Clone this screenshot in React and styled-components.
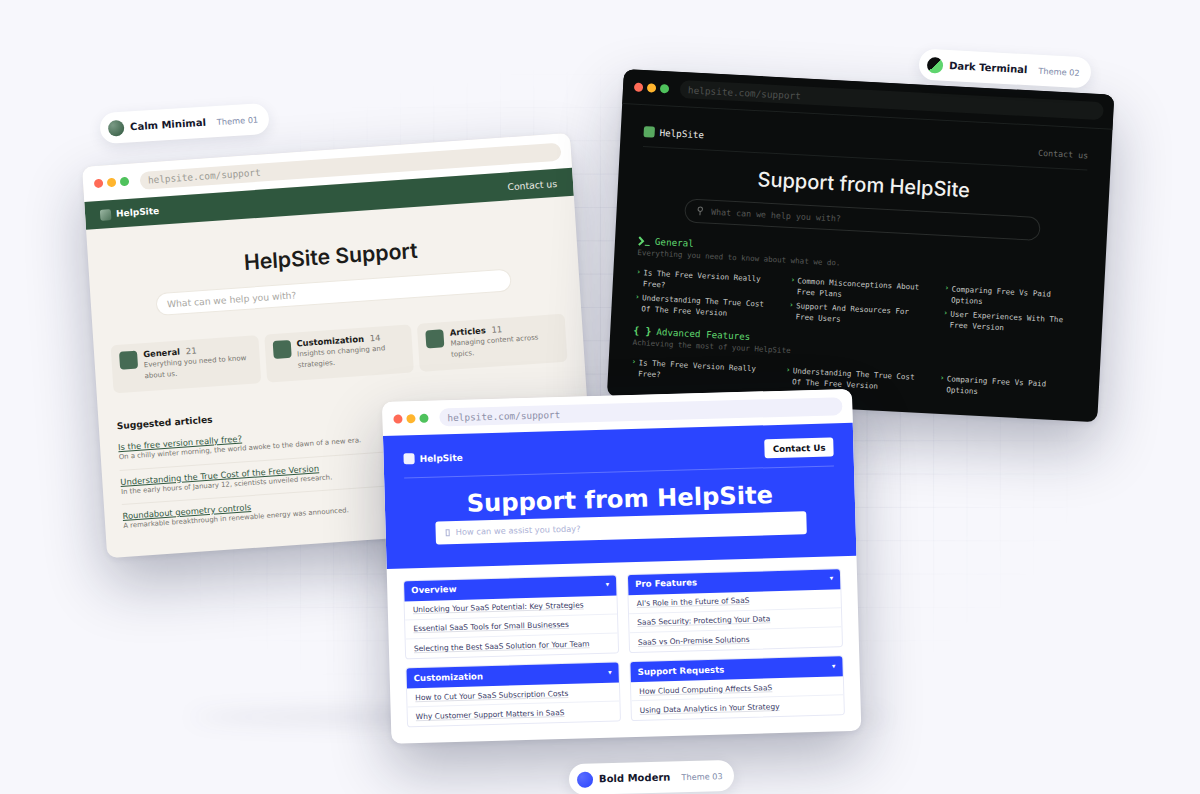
import React from "react";
import styled, { createGlobalStyle } from "styled-components";

const sans = `"DejaVu Sans", sans-serif`;
const inter = `Inter, "DejaVu Sans", sans-serif`;
const mono = `"DejaVu Sans Mono", monospace`;

const GlobalStyle = createGlobalStyle`
  html, body {
    margin: 0;
    padding: 0;
    background: #f7f7fc;
  }
  * {
    box-sizing: border-box;
  }
`;

const Stage = styled.div`
  position: relative;
  width: 1200px;
  height: 794px;
  overflow: hidden;
  background: #f7f7fc;
  font-family: ${sans};
`;

const Grid = styled.div`
  position: absolute;
  inset: 0;
  background-image: linear-gradient(rgba(60, 70, 120, 0.05) 1px, transparent 1px),
    linear-gradient(90deg, rgba(60, 70, 120, 0.05) 1px, transparent 1px);
  background-size: 33.33px 33.33px;
  background-position: 0 7px;
  mask-image: radial-gradient(ellipse 520px 340px at 600px 400px, #000 55%, transparent 100%);
`;

const FloorShadow = styled.div`
  position: absolute;
  left: 190px;
  top: 708px;
  width: 700px;
  height: 18px;
  border-radius: 50%;
  background: rgba(40, 45, 80, 0.09);
  filter: blur(10px);
`;

const Win = styled.div`
  position: absolute;
  left: ${(p) => p.$x}px;
  top: ${(p) => p.$y}px;
  width: ${(p) => p.$w}px;
  height: ${(p) => p.$h}px;
  transform: rotate(${(p) => p.$r}deg) skewY(${(p) => p.$skew || 0}deg);
  transform-origin: 0 0;
  border-radius: 10px;
  overflow: hidden;
  display: flex;
  flex-direction: column;
  background: ${(p) => p.$bg};
  box-shadow: 0 26px 60px rgba(20, 25, 55, 0.3), 0 2px 6px rgba(20, 25, 55, 0.08);
`;

const Chrome = styled.div`
  flex: none;
  height: ${(p) => p.$h}px;
  display: flex;
  align-items: center;
  gap: 4px;
  padding: 0 10px 0 11px;
  background: ${(p) => p.$bg};
  border-bottom: ${(p) => (p.$line ? `1px solid ${p.$line}` : "none")};
`;

const Dot = styled.span`
  width: 9px;
  height: 9px;
  border-radius: 50%;
  background: ${(p) => p.$c};
`;

const Url = styled.div`
  flex: 1;
  height: 18px;
  margin-left: 7px;
  padding-left: 8px;
  display: flex;
  align-items: center;
  border-radius: 9px;
  background: ${(p) => p.$bg};
  color: ${(p) => p.$c};
  font-family: ${mono};
  font-size: 9.4px;
`;

const BrowserBar = ({ bg, url, urlColor, line, h = 35 }) => (
  <Chrome $bg={bg} $line={line} $h={h}>
    <Dot $c="#ff6b57" />
    <Dot $c="#ffb52e" />
    <Dot $c="#4fc25c" />
    <Url $bg={url} $c={urlColor}>helpsite.com/support</Url>
  </Chrome>
);

/* Calm minimal */
const CalmNav = styled.div`
  flex: none;
  height: 28px;
  padding: 0 16px 0 15px;
  display: flex;
  align-items: center;
  justify-content: space-between;
  background: #2f573e;
  color: #f5f2ed;
`;

const Brand = styled.div`
  display: flex;
  align-items: center;
  gap: ${(p) => p.$gap || 5}px;
  font-family: ${(p) => p.$font || sans};
  font-weight: ${(p) => p.$weight || 700};
  font-size: ${(p) => p.$size || 9}px;
  color: ${(p) => p.$c || "#fff"};
`;

const BrandMark = styled.span`
  width: ${(p) => p.$s || 11}px;
  height: ${(p) => p.$s || 11}px;
  border-radius: 2.5px;
  background: ${(p) => p.$bg};
`;

const CalmLink = styled.span`
  font-size: 9.25px;
  color: #f0eee8;
`;

const CalmBody = styled.div`
  flex: 1;
  padding: 28px 17px 0;
  display: flex;
  flex-direction: column;
`;

const CalmTitle = styled.h1`
  margin: 0;
  padding-right: 4px;
  text-align: center;
  font-family: ${inter};
  font-weight: 600;
  font-size: 21.2px;
  line-height: 30px;
  color: #1c1c1a;
`;

const CalmSearch = styled.div`
  align-self: center;
  width: 356px;
  height: 23px;
  margin: 10px 3px 0 0;
  padding-left: 10px;
  display: flex;
  align-items: center;
  border-radius: 12px;
  background: #fff;
  border: 1px solid #ece8e0;
  color: #a9a7a2;
  font-size: 9.2px;
`;

const CalmCards = styled.div`
  display: grid;
  grid-template-columns: repeat(3, 1fr);
  gap: 6px;
  margin-top: 26px;
`;

const CalmCard = styled.div`
  height: 48px;
  padding: 6px 8px 0;
  display: flex;
  gap: 6px;
  border-radius: 6px;
  background: #eeeae3;
`;

const CalmIcon = styled.span`
  flex: none;
  width: 18px;
  height: 18px;
  margin-top: 1px;
  border-radius: 4px;
  background: #466b54;
`;

const CalmCardTitle = styled.div`
  font-size: 8.4px;
  font-weight: 700;
  line-height: 11px;
  color: #1c1c1a;

  span {
    margin-left: 3px;
    font-weight: 400;
    color: #77756f;
  }
`;

const CalmCardText = styled.div`
  font-size: 7px;
  line-height: 10.5px;
  color: #77756f;
`;

const CalmHeading = styled.h2`
  margin: 27px 0 3px 1px;
  font-size: 9.1px;
  font-weight: 700;
  line-height: 13px;
  color: #1c1c1a;
`;

const CalmArticle = styled.div`
  margin-left: 1px;
  padding: 6px 0 7.5px;
  border-bottom: ${(p) => (p.$last ? "none" : "1px solid #e9e5de")};
`;

const CalmArticleLink = styled.div`
  font-size: 8.3px;
  line-height: 11px;
  color: #2f573e;
  text-decoration: underline;
`;

const CalmArticleText = styled.div`
  font-size: 6.9px;
  line-height: 9px;
  color: #77756f;
`;

const calmCards = [
  ["General", "21", "Everything you need to know about us."],
  ["Customization", "14", "Insights on changing and strategies."],
  ["Articles", "11", "Managing content across topics."],
];

const calmArticles = [
  ["Is the free version really free?", "On a chilly winter morning, the world awoke to the dawn of a new era."],
  ["Understanding the True Cost of the Free Version", "In the early hours of January 12, scientists unveiled research."],
  ["Roundabout geometry controls", "A remarkable breakthrough in renewable energy was announced."],
];

const CalmWindow = () => (
  <Win $x={82} $y={167} $w={489} $h={392} $r={-3.7} $skew={-0.3} $bg="#f5f2ed">
    <BrowserBar bg="#fff" url="#efeae3" urlColor="#9b9a94" />
    <CalmNav>
      <Brand>
        <BrandMark $bg="linear-gradient(135deg, #9cb8a4, #4d7259)" />
        HelpSite
      </Brand>
      <CalmLink>Contact us</CalmLink>
    </CalmNav>
    <CalmBody>
      <CalmTitle>HelpSite Support</CalmTitle>
      <CalmSearch>What can we help you with?</CalmSearch>
      <CalmCards>
        {calmCards.map(([title, count, text]) => (
          <CalmCard key={title}>
            <CalmIcon />
            <div>
              <CalmCardTitle>
                {title} <span>{count}</span>
              </CalmCardTitle>
              <CalmCardText>{text}</CalmCardText>
            </div>
          </CalmCard>
        ))}
      </CalmCards>
      <CalmHeading>Suggested articles</CalmHeading>
      {calmArticles.map(([title, text], i) => (
        <CalmArticle key={title} $last={i === calmArticles.length - 1}>
          <CalmArticleLink>{title}</CalmArticleLink>
          <CalmArticleText>{text}</CalmArticleText>
        </CalmArticle>
      ))}
    </CalmBody>
  </Win>
);

/* Dark terminal */
const DarkBody = styled.div`
  flex: 1;
  padding: 0 23px;
  font-family: ${mono};
`;

const DarkNav = styled.div`
  height: 42px;
  padding-top: 12px;
  display: flex;
  align-items: center;
  justify-content: space-between;
  border-bottom: 1px solid #1d2120;
`;

const DarkContact = styled.span`
  font-size: 8.3px;
  color: #6b6d6b;
`;

const DarkTitle = styled.h1`
  margin: 11px 0 0;
  text-align: center;
  font-family: ${inter};
  font-weight: 500;
  font-size: 20px;
  line-height: 30px;
  color: #f2f2f0;
`;

const DarkSearch = styled.div`
  width: 356px;
  height: 24px;
  margin: 8px auto 0;
  padding-left: 11px;
  display: flex;
  align-items: center;
  gap: 8px;
  border: 1px solid #2a2d2c;
  border-radius: 12px;
  font-size: 8.3px;
  color: #565856;
`;

const DarkHeading = styled.div`
  margin-top: ${(p) => p.$top}px;
  display: flex;
  align-items: center;
  gap: 5px;
  font-size: 9.2px;
  line-height: 13px;
  color: #5fd56e;
`;

const DarkBraces = styled.span`
  font-weight: 700;
  font-size: 10px;
`;

const DarkSub = styled.div`
  font-size: 7.5px;
  line-height: 12px;
  color: #585a58;
`;

const DarkColumns = styled.div`
  display: grid;
  grid-template-columns: repeat(3, 1fr);
  margin-top: 9px;
  width: 463px;
`;

const DarkColumn = styled.div`
  display: flex;
  flex-direction: column;
  gap: 4px;
  padding-right: 20px;
`;

const DarkItem = styled.div`
  position: relative;
  padding-left: 7px;
  font-size: 7.5px;
  line-height: 10.5px;
  color: #c9cbc8;

  &::before {
    content: "›";
    position: absolute;
    left: 0;
    top: -1px;
    color: #5fd56e;
  }
`;

const darkGeneral = [
  ["Is The Free Version Really Free?", "Understanding The True Cost Of The Free Version"],
  ["Common Misconceptions About Free Plans", "Support And Resources For Free Users"],
  ["Comparing Free Vs Paid Options", "User Experiences With The Free Version"],
];

const darkAdvanced = [
  ["Is The Free Version Really Free?"],
  ["Understanding The True Cost Of The Free Version"],
  ["Comparing Free Vs Paid Options"],
];

const DarkList = ({ columns }) => (
  <DarkColumns>
    {columns.map((items, i) => (
      <DarkColumn key={i}>
        {items.map((item) => (
          <DarkItem key={item}>{item}</DarkItem>
        ))}
      </DarkColumn>
    ))}
  </DarkColumns>
);

const DarkWindow = () => (
  <Win $x={624} $y={69} $w={491} $h={328} $r={3} $bg="#0b0d0d">
    <BrowserBar bg="#0b0d0d" url="#151817" urlColor="#4f514f" line="#1d2120" />
    <DarkBody>
      <DarkNav>
        <Brand $font={mono} $size={9.2} $weight={400} $c="#ececea">
          <BrandMark $bg="#58a95f" />
          HelpSite
        </Brand>
        <DarkContact>Contact us</DarkContact>
      </DarkNav>
      <DarkTitle>Support from HelpSite</DarkTitle>
      <DarkSearch>
        <svg width="7" height="10" viewBox="0 0 7 10" fill="none" stroke="#6b6d6b" strokeWidth="1">
          <circle cx="3.5" cy="3" r="2.2" />
          <path d="M3.5 5.2V9" />
        </svg>
        What can we help you with?
      </DarkSearch>
      <DarkHeading $top={14}>
        <svg width="12" height="10" viewBox="0 0 12 10" fill="none" stroke="#5fd56e">
          <path d="M1 1l4 4-4 4" strokeWidth="2" />
          <path d="M7 9h5" strokeWidth="1" />
        </svg>
        General
      </DarkHeading>
      <DarkSub>Everything you need to know about what we do.</DarkSub>
      <DarkList columns={darkGeneral} />
      <DarkHeading $top={10}>
        <DarkBraces>{"{ }"}</DarkBraces> Advanced Features
      </DarkHeading>
      <DarkSub>Achieving the most of your HelpSite</DarkSub>
      <DarkList columns={darkAdvanced} />
    </DarkBody>
  </Win>
);

/* Bold modern */
const BoldHero = styled.div`
  flex: none;
  height: 133px;
  padding: 0 20px;
  background: #2b45ff;
`;

const BoldNav = styled.div`
  height: 43px;
  padding-top: 5px;
  display: flex;
  align-items: center;
  justify-content: space-between;
  border-bottom: 1px solid rgba(255, 255, 255, 0.25);
`;

const BoldContact = styled.span`
  height: 19px;
  padding: 0 8px;
  display: flex;
  align-items: center;
  border-radius: 3px;
  background: #fff;
  color: #0d0d14;
  font-size: 8.6px;
  font-weight: 700;
`;

const BoldTitle = styled.h1`
  margin: 9.5px 0 0;
  text-align: center;
  font-size: 24.2px;
  font-weight: 700;
  line-height: 34px;
  color: #fff;
`;

const BoldSearch = styled.div`
  width: 371px;
  height: 23px;
  margin: 0 auto;
  padding-left: 10px;
  display: flex;
  align-items: center;
  gap: 6px;
  border-radius: 3px;
  background: #fff;
  color: #adb2d6;
  font-size: 8.3px;
`;

const MissingGlyph = styled.span`
  width: 4.5px;
  height: 7px;
  border: 1px solid #adb2d6;
`;

const BoldGrid = styled.div`
  padding: 12px 16px 0;
  display: grid;
  grid-template-columns: 1fr 1fr;
  align-items: start;
  gap: 8px 10px;
`;

const BoldCard = styled.div`
  border: 1px solid #e7e9f6;
  border-radius: 4px;
  overflow: hidden;
`;

const BoldCardHead = styled.div`
  height: 20.5px;
  margin: -1px -1px 0;
  padding: 0 8px;
  display: flex;
  align-items: center;
  justify-content: space-between;
  background: #2b45ff;
  color: #fff;
  font-size: 8.6px;
  font-weight: 700;

  span {
    font-size: 7px;
  }
`;

const BoldRow = styled.div`
  height: 19.3px;
  padding-left: 8px;
  display: flex;
  align-items: center;
  border-bottom: ${(p) => (p.$last ? "none" : "1px solid #eef0f8")};
  color: #3a3c68;
  font-size: 7.5px;
  text-decoration: underline;
  text-decoration-color: rgba(58, 60, 104, 0.16);
`;

const boldCards = [
  ["Overview", ["Unlocking Your SaaS Potential: Key Strategies", "Essential SaaS Tools for Small Businesses", "Selecting the Best SaaS Solution for Your Team"]],
  ["Pro Features", ["AI's Role in the Future of SaaS", "SaaS Security: Protecting Your Data", "SaaS vs On-Premise Solutions"]],
  ["Customization", ["How to Cut Your SaaS Subscription Costs", "Why Customer Support Matters in SaaS"]],
  ["Support Requests", ["How Cloud Computing Affects SaaS", "Using Data Analytics in Your Strategy"]],
];

const BoldWindow = () => (
  <Win $x={382} $y={402} $w={470} $h={342} $r={-1.6} $bg="#fff">
    <BrowserBar bg="#fff" url="#f0f0fb" urlColor="#8d8fa8" h={34} />
    <BoldHero>
      <BoldNav>
        <Brand>
          <BrandMark $bg="#f1f2ff" />
          HelpSite
        </Brand>
        <BoldContact>Contact Us</BoldContact>
      </BoldNav>
      <BoldTitle>Support from HelpSite</BoldTitle>
      <BoldSearch>
        <MissingGlyph />
        How can we assist you today?
      </BoldSearch>
    </BoldHero>
    <BoldGrid>
      {boldCards.map(([title, rows]) => (
        <BoldCard key={title}>
          <BoldCardHead>
            {title}
            <span>▾</span>
          </BoldCardHead>
          {rows.map((row, i) => (
            <BoldRow key={row} $last={i === rows.length - 1}>
              <span>{row}</span>
            </BoldRow>
          ))}
        </BoldCard>
      ))}
    </BoldGrid>
  </Win>
);

/* Theme labels */
const Pill = styled.div`
  position: absolute;
  left: ${(p) => p.$x}px;
  top: ${(p) => p.$y}px;
  height: 31px;
  padding: 0 11px 0 8px;
  display: flex;
  align-items: center;
  gap: 6px;
  border-radius: 16px;
  background: #fff;
  transform: rotate(${(p) => p.$r}deg);
  box-shadow: 0 4px 14px rgba(30, 35, 70, 0.1);
`;

const PillDot = styled.span`
  width: 16px;
  height: 16px;
  border-radius: 50%;
  background: ${(p) => p.$bg};
`;

const PillName = styled.span`
  font-size: 10px;
  font-weight: 700;
  color: #14162b;
`;

const PillTheme = styled.span`
  margin-left: 5px;
  font-size: 8.2px;
  color: #7c88a8;
`;

const pills = [
  { x: 100, y: 108, r: -3.5, name: "Calm Minimal", theme: "Theme 01", bg: "radial-gradient(circle at 30% 30%, #7a9a85, #2f573e)" },
  { x: 919, y: 53, r: 3, name: "Dark Terminal", theme: "Theme 02", bg: "linear-gradient(135deg, #0b0d0d 50%, #5fd56e 50%)" },
  { x: 569, y: 762, r: -1.5, name: "Bold Modern", theme: "Theme 03", bg: "radial-gradient(circle at 30% 30%, #5a6dff, #2b45ff)" },
];

const App = () => (
  <Stage>
    <GlobalStyle />
    <Grid />
    <FloorShadow />
    <CalmWindow />
    <DarkWindow />
    <BoldWindow />
    {pills.map((p) => (
      <Pill key={p.name} $x={p.x} $y={p.y} $r={p.r}>
        <PillDot $bg={p.bg} />
        <PillName>{p.name}</PillName>
        <PillTheme>{p.theme}</PillTheme>
      </Pill>
    ))}
  </Stage>
);

export default App;
